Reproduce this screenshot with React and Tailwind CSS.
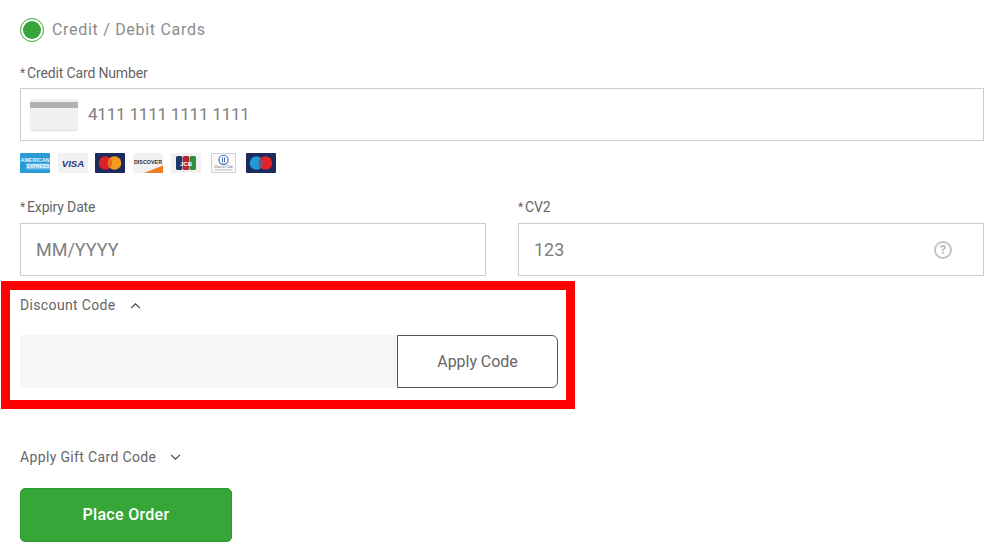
const font = "font-['Roboto',sans-serif]";

function CardLogo({ children, className = '' }) {
  return (
    <svg viewBox="0 0 30 20" className={`w-[30px] h-[20px] shrink-0 ${className}`}>
      {children}
    </svg>
  );
}

function Amex() {
  return (
    <CardLogo>
      <rect width="30" height="20" rx="1" fill="#2a9ad6" />
      <text x="0.5" y="8.5" textLength="29" lengthAdjust="spacingAndGlyphs" fontSize="5.4" fontWeight="700" fill="#e8f5fc" fontFamily="Liberation Sans">AMERICAN</text>
      <rect x="6" y="10.5" width="24" height="6" fill="#6cc0ea" />
      <text x="7" y="15.4" textLength="22" lengthAdjust="spacingAndGlyphs" fontSize="4.8" fontWeight="700" fill="#f4fbff" fontFamily="Liberation Sans">EXPRESS</text>
    </CardLogo>
  );
}

function Visa() {
  return (
    <CardLogo>
      <rect width="30" height="20" rx="1" fill="#f1f1f3" />
      <text x="15" y="14" textAnchor="middle" fontSize="9.6" fontWeight="700" fontStyle="italic" fill="#25377f" fontFamily="Liberation Sans">VISA</text>
    </CardLogo>
  );
}

function Mastercard() {
  return (
    <CardLogo>
      <rect width="30" height="20" rx="1" fill="#1d2a5c" />
      <circle cx="10.5" cy="10" r="6.8" fill="#d9222a" />
      <circle cx="19.5" cy="10" r="6.8" fill="#f19b21" />
      <path d="M15 5a6.8 6.8 0 0 1 0 10a6.8 6.8 0 0 1 0-10z" fill="#ec6a1e" />
    </CardLogo>
  );
}

function Discover() {
  return (
    <CardLogo>
      <rect width="30" height="20" rx="1" fill="#f1f1f1" />
      <text x="1" y="10.5" textLength="28" lengthAdjust="spacingAndGlyphs" fontSize="5.4" fontWeight="700" fill="#333" fontFamily="Liberation Sans">DISCOVER</text>
      <path d="M11 20L30 12.5V20z" fill="#ef7d22" />
    </CardLogo>
  );
}

function Jcb() {
  return (
    <CardLogo>
      <rect width="30" height="20" rx="1" fill="#f1f1f1" />
      <rect x="5" y="3" width="6.4" height="14" rx="1.6" fill="#20366f" />
      <rect x="11.8" y="3" width="6.4" height="14" rx="1.6" fill="#c3202f" />
      <rect x="18.6" y="3" width="6.4" height="14" rx="1.6" fill="#2c8f3e" />
      <text x="15" y="12.5" textAnchor="middle" fontSize="6" fontWeight="700" fill="#fff" fontFamily="Liberation Sans">JCB</text>
    </CardLogo>
  );
}

function Diners() {
  return (
    <svg viewBox="0 0 25 20" className="w-[25px] h-[20px] shrink-0">
      <rect x="0.5" y="0.5" width="24" height="19" fill="#fafafa" stroke="#c8d2e2" />
      <circle cx="12.5" cy="6.8" r="4.6" fill="#fff" stroke="#3b6aa8" strokeWidth="1.1" />
      <path d="M11.5 4.4v4.8M13.5 4.4v4.8" stroke="#3b6aa8" strokeWidth="1" />
      <text x="12.5" y="15" textAnchor="middle" fontSize="3.8" fill="#666" fontFamily="Liberation Serif">Diners Club</text>
      <rect x="4" y="16.4" width="17" height="1" fill="#bbb" />
    </svg>
  );
}

function Maestro() {
  return (
    <CardLogo>
      <rect width="30" height="20" rx="1" fill="#1d2a5c" />
      <circle cx="10.5" cy="10" r="6.8" fill="#1e9bd7" />
      <circle cx="19.5" cy="10" r="6.8" fill="#e4222c" />
      <path d="M15 5a6.8 6.8 0 0 1 0 10a6.8 6.8 0 0 1 0-10z" fill="#8f4a6e" />
    </CardLogo>
  );
}

function FieldLabel({ children }) {
  return (
    <div className="flex h-[20px] items-center text-[14px] tracking-[-0.15px] text-[#666]">
      <span className="mr-[2px] text-[12px]">*</span>
      {children}
    </div>
  );
}

function TextBox({ value, className = '', children }) {
  return (
    <div className={`flex h-[53px] items-center border border-[#ccc] text-[#808080] ${className}`}>
      {children}
      <span>{value}</span>
    </div>
  );
}

function Chevron({ up }) {
  return (
    <svg viewBox="0 0 12 8" className="ml-[14px] w-[11px] h-[7px]" fill="none" stroke="#444" strokeWidth="1.4">
      <path d={up ? 'M1 7l5-5 5 5' : 'M1 1l5 5 5-5'} />
    </svg>
  );
}

export default function App() {
  return (
    <div className={`relative h-[560px] w-[1000px] overflow-hidden bg-white px-[20px] pt-[18px] ${font}`}>
      <div className="flex h-[24px] items-center">
        <div className="flex h-[24px] w-[24px] items-center justify-center rounded-full border border-[#37a639]">
          <div className="h-[18px] w-[18px] rounded-full bg-[#37a639]" />
        </div>
        <span className="ml-[8px] text-[16px] tracking-[0.7px] text-[#8c8c8c]">Credit / Debit Cards</span>
      </div>

      <div className="mt-[21px]">
        <FieldLabel>Credit Card Number</FieldLabel>
      </div>
      <TextBox value="4111 1111 1111 1111" className="mt-[5px] w-[964px] pl-[9px] text-[17px] tracking-[-0.2px]">
        <div className="mr-[10px] h-[31px] w-[48px] rounded-[2px] bg-[#f0f0f0] pt-[3px] shadow-[0_1px_1px_#ddd]">
          <div className="h-[6px] bg-[#b0b0b0]" />
        </div>
      </TextBox>

      <div className="mt-[12px] flex h-[20px] items-center">
        <Amex />
        <div className="ml-[8px]"><Visa /></div>
        <div className="ml-[7px]"><Mastercard /></div>
        <div className="ml-[8px]"><Discover /></div>
        <div className="ml-[8px]"><Jcb /></div>
        <div className="ml-[10px]"><Diners /></div>
        <div className="ml-[10px]"><Maestro /></div>
      </div>

      <div className="mt-[24px] flex w-[964px] gap-[32px]">
        <div className="w-[466px]">
          <FieldLabel>Expiry Date</FieldLabel>
          <TextBox value="MM/YYYY" className="mt-[6px] pl-[15px] text-[18px]" />
        </div>
        <div className="w-[466px]">
          <FieldLabel>CV2</FieldLabel>
          <div className="mt-[6px] flex h-[53px] items-center justify-between border border-[#ccc] pl-[15px] pr-[31px] text-[18px] text-[#808080]">
            <span>123</span>
            <div className="flex h-[18px] w-[18px] items-center justify-center rounded-full border-2 border-[#c4c4c4] text-[13px] font-bold text-[#bbb]">?</div>
          </div>
        </div>
      </div>

      <div className="mt-[19px] flex h-[20px] items-center text-[14px] tracking-[0.35px] text-[#666]">
        Discount Code
        <Chevron up />
      </div>
      <div className="mt-[20px] flex h-[53px] w-[538px]">
        <div className="w-[377px] bg-[#f6f6f6]" />
        <div className="flex w-[161px] items-center justify-center rounded-r-[6px] border border-[#555] text-[16px] tracking-[-0.05px] text-[#666]">
          Apply Code
        </div>
      </div>

      <div className="mt-[59px] flex h-[20px] items-center text-[14px] tracking-[0.35px] text-[#666]">
        Apply Gift Card Code
        <Chevron />
      </div>
      <div className="mt-[21px] flex h-[54px] w-[212px] items-center justify-center rounded-[5px] border border-[#2f9a33] bg-[#37a639] text-[16px] font-medium tracking-[0.3px] text-white">
        Place Order
      </div>

      {/* red annotation round the discount block */}
      <div className="pointer-events-none absolute left-[1px] top-[281px] h-[128px] w-[574px] border-[9px] border-[#ff0000]" />
    </div>
  );
}
